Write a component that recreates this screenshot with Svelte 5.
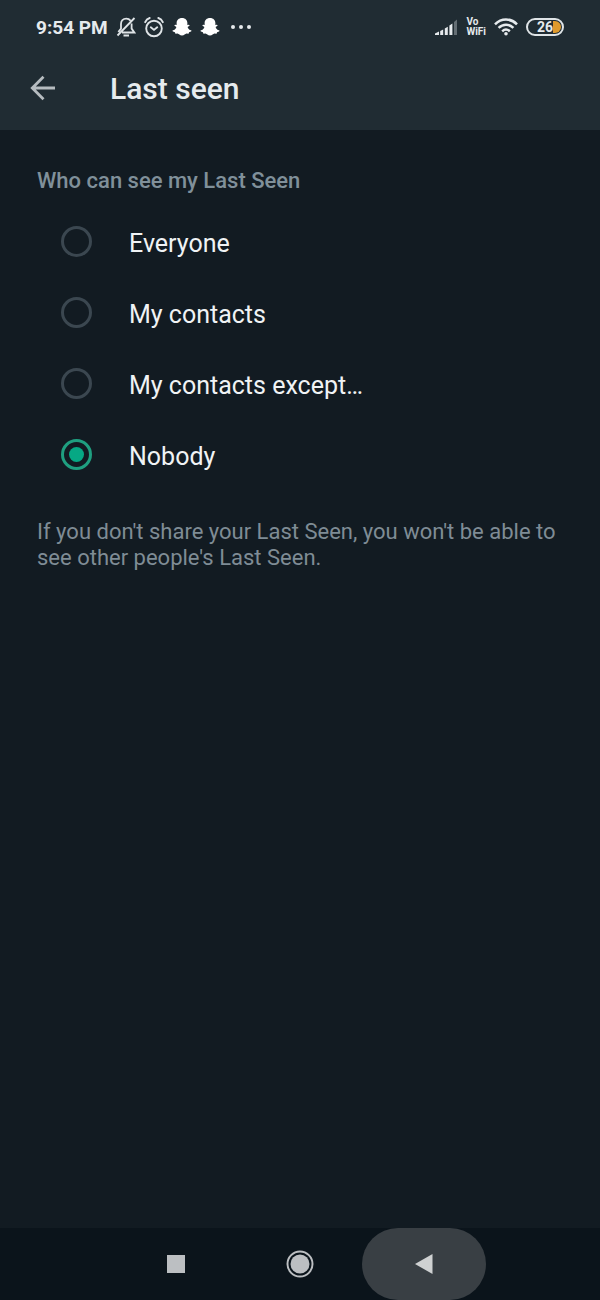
<script lang="ts">
  type Option = { value: string; label: string };

  const options: Option[] = [
    { value: 'everyone', label: 'Everyone' },
    { value: 'contacts', label: 'My contacts' },
    { value: 'except', label: 'My contacts except…' },
    { value: 'nobody', label: 'Nobody' }
  ];

  let selected = $state('nobody');
</script>

{#snippet ghost()}
  <svg width="20" height="20" viewBox="-1 -1 22 22" aria-hidden="true">
    <path
      fill="#fff"
      d="M10 0c3.700 0 5.900 2.400 5.900 5.500v2.200l1.500-.2c1.100.1 1.200 1 .4 1.500l-1.600.9c.4 1.800 1.700 3.100 3.800 3.800.6.300.5 1-.1 1.300l-2.100.8-.6 1.500-2.300-.1c-1.500.4-2.300 2.100-4.900 2.100s-3.400-1.700-4.900-2.100l-2.300.1-.6-1.500-2.100-.8c-.6-.3-.7-1-.1-1.300 2.100-.7 3.400-2 3.800-3.800L2.200 9c-.8-.5-.7-1.400.4-1.500l1.500.2V5.500C4.100 2.400 6.300 0 10 0z"
    />
  </svg>
{/snippet}

<div class="screen">
  <div class="status">
    <span class="time">9:54 PM</span>
    <svg width="20" height="22" viewBox="0 0 20 22" fill="none" stroke="#dfe4e7" stroke-width="1.800" aria-hidden="true">
      <path d="M14.500 4.600C13.500 3.300 12 2.600 10.300 2.600 7 2.600 5 5 5 8v4.600L2.300 16M15.600 7.500v5.100l2.700 3.900H6M18.500 2 1.500 19.500" />
      <path d="M7.500 19.500h5.500" stroke-width="2" />
    </svg>
    <svg width="20" height="22" viewBox="0 0 20 22" fill="none" stroke="#dfe4e7" stroke-width="1.900" aria-hidden="true">
      <circle cx="10" cy="12.500" r="7.800" />
      <path d="M1.200 6.200C2 4.200 3.500 2.700 5.700 2M18.800 6.200c-.8-2-2.300-3.500-4.500-4.200M6.800 11.300l3.200 2.600 3.200-2.600" stroke-linecap="round" />
    </svg>
    {@render ghost()}
    {@render ghost()}
    <svg class="more" width="20" height="6" viewBox="0 0 20 6" fill="#e6eaed" aria-hidden="true">
      <circle cx="2" cy="3" r="2" />
      <circle cx="10" cy="3" r="2" />
      <circle cx="18" cy="3" r="2" />
    </svg>

    <div class="network">
      <svg width="23" height="18" viewBox="0 0 23 18" fill="#e6eaed" aria-hidden="true">
        <path d="M0 17v-1.500L4 13.500V17zM5.200 13l3-1.500V17h-3zM9.800 10.500l3-1.700V17h-3zM14.400 7.500l3-2V17h-3z" />
        <path d="m19 4 3-2.500V17h-3z" opacity=".35" />
      </svg>
      <span class="vowifi">Vo<br />WiFi</span>
      <svg width="24" height="18" viewBox="0 0 24 18" fill="none" stroke="#e6eaed" stroke-width="2.500" aria-hidden="true">
        <path d="M1 6.300C7.300-.1 16.700-.1 23 6.300M4.600 9.900c4.300-4.300 10.500-4.300 14.800 0M8.200 13.300c2.300-2.200 5.300-2.200 7.600 0" />
        <circle cx="12" cy="15.700" r="1.800" fill="#e6eaed" stroke="none" />
      </svg>
      <span class="battery">26<i></i></span>
    </div>
  </div>

  <header>
    <button class="back" aria-label="Navigate up">
      <svg width="26" height="26" viewBox="0 0 26 26" fill="none" stroke="#b6bcc0" stroke-width="2.800" aria-hidden="true">
        <path d="M25 13H3M13.500 1.800 2.300 13l11.200 11.200" />
      </svg>
    </button>
    <h1>Last seen</h1>
  </header>

  <main>
    <fieldset>
      <legend>Who can see my Last Seen</legend>
      {#each options as option (option.value)}
        <label>
          <input type="radio" name="last-seen" value={option.value} bind:group={selected} />
          <span>{option.label}</span>
        </label>
      {/each}
    </fieldset>
    <p>If you don't share your Last Seen, you won't be able to see other people's Last Seen.</p>
  </main>

  <nav>
    <button aria-label="Recent apps">
      <svg width="18" height="18" viewBox="0 0 18 18"><path d="M0 0h18v18H0z" fill="#bcbfc2" /></svg>
    </button>
    <button aria-label="Home">
      <svg width="28" height="28" viewBox="0 0 28 28">
        <circle cx="14" cy="14" r="12.500" fill="none" stroke="#bcbfc2" stroke-width="2" />
        <circle cx="14" cy="14" r="9.500" fill="#bcbfc2" />
      </svg>
    </button>
    <button class="pressed" aria-label="Back">
      <svg width="18" height="20" viewBox="0 0 18 20"><path d="M0 10 17.500 0v20z" fill="#cfd1d2" /></svg>
    </button>
  </nav>
</div>

<style>
  :global(body) {
    margin: 0;
    background: #121b22;
  }

  .screen {
    display: flex;
    flex-direction: column;
    min-height: 100vh;
    background: #121b22;
    color: #f0f3f5;
    font-family: Roboto, sans-serif;
  }

  .status {
    display: flex;
    align-items: center;
    gap: 8px;
    height: 54px;
    padding: 0 36px;
    background: #202c33;
    color: #e6eaed;
  }

  .time {
    font-size: 19px;
    font-weight: 700;
    white-space: nowrap;
  }

  .more {
    margin-left: 3px;
  }

  .network {
    display: flex;
    align-items: center;
    gap: 8px;
    margin-left: auto;
  }

  .vowifi {
    font-size: 10px;
    font-weight: 700;
    line-height: 10px;
  }

  .battery {
    display: flex;
    align-items: center;
    justify-content: flex-end;
    box-sizing: border-box;
    width: 38px;
    height: 18px;
    padding-right: 1px;
    border: 2px solid #dfe4e7;
    border-radius: 9px;
    font-size: 14px;
    font-weight: 700;
  }

  .battery i {
    width: 8px;
    height: 12px;
    border-radius: 0 6px 6px 0;
    background: #e09a2c;
  }

  header {
    display: flex;
    align-items: center;
    gap: 54px;
    height: 76px;
    padding: 0 30px;
    background: #202c33;
  }

  button {
    display: flex;
    align-items: center;
    justify-content: center;
    padding: 0;
    border: none;
    background: none;
    cursor: pointer;
  }

  .back {
    padding-bottom: 8px;
  }

  h1 {
    margin: 0;
    padding-bottom: 6px;
    color: #e6ebee;
    font-size: 30px;
    font-weight: 500;
    line-height: 36px;
  }

  main {
    flex: 1;
    padding: 37px 36px 0 37px;
  }

  fieldset {
    margin: 0;
    padding: 0;
    border: none;
  }

  legend {
    padding: 0 0 11px;
    color: #80909a;
    font-size: 22px;
    font-weight: 500;
    line-height: 28px;
  }

  label {
    display: flex;
    align-items: center;
    gap: 37px;
    height: 71px;
    padding-left: 24px;
    font-size: 25px;
    cursor: pointer;
  }

  label span {
    padding-top: 3px;
  }

  input {
    display: grid;
    place-items: center;
    box-sizing: border-box;
    width: 31px;
    height: 31px;
    margin: 0;
    border: 3px solid #3b4750;
    border-radius: 50%;
    appearance: none;
  }

  input:checked {
    border-color: #1f9f80;
  }

  input:checked::before {
    width: 15px;
    height: 15px;
    border-radius: 50%;
    background: #06a884;
    content: '';
  }

  p {
    margin: 29px 0 0;
    color: #7f8c95;
    font-size: 22px;
    line-height: 26px;
  }

  nav {
    display: flex;
    justify-content: center;
    height: 72px;
    background: #0b141b;
  }

  nav button {
    width: 124px;
  }

  .pressed {
    border-radius: 36px;
    background: #393f44;
  }
</style>
